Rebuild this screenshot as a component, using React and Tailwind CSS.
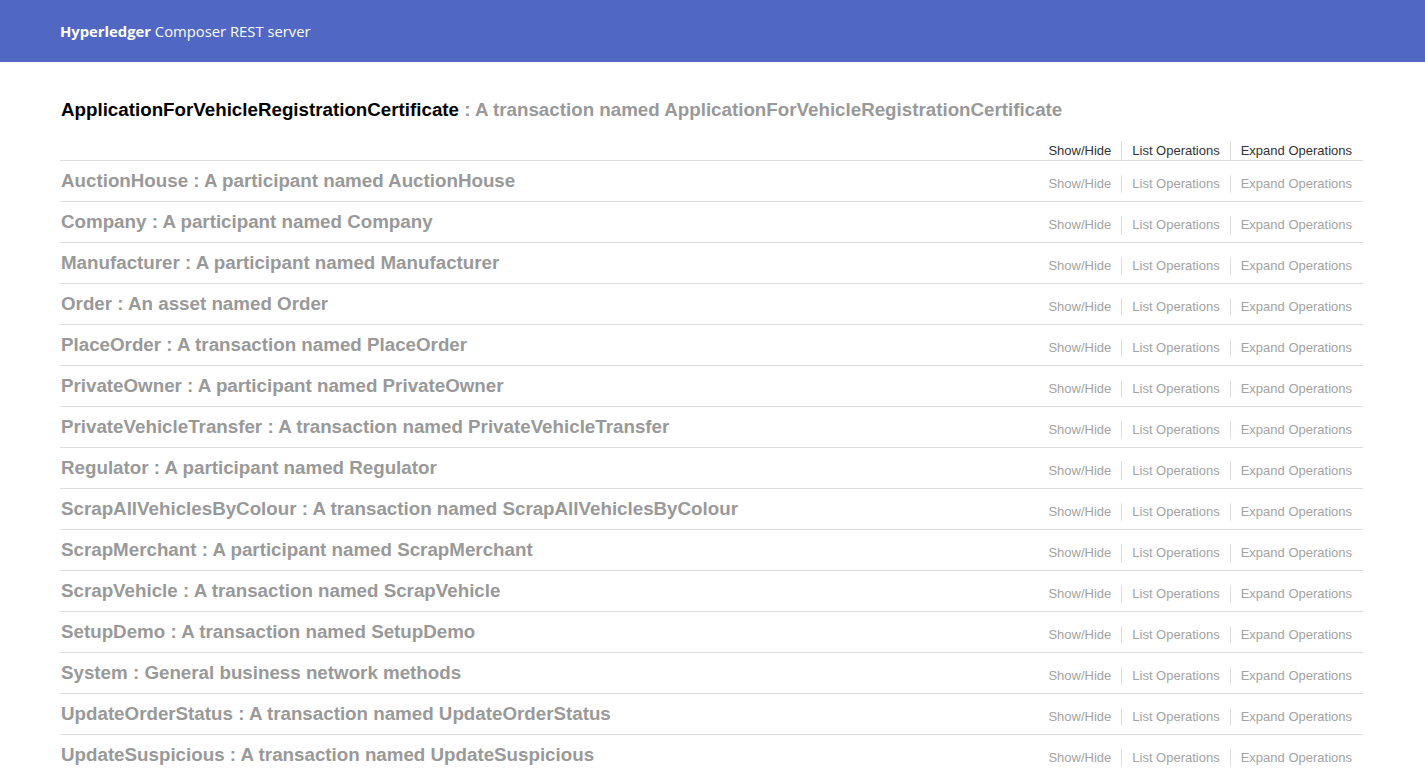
import React from 'react';

const resources = [
  ['AuctionHouse', 'A participant named AuctionHouse'],
  ['Company', 'A participant named Company'],
  ['Manufacturer', 'A participant named Manufacturer'],
  ['Order', 'An asset named Order'],
  ['PlaceOrder', 'A transaction named PlaceOrder'],
  ['PrivateOwner', 'A participant named PrivateOwner'],
  ['PrivateVehicleTransfer', 'A transaction named PrivateVehicleTransfer'],
  ['Regulator', 'A participant named Regulator'],
  ['ScrapAllVehiclesByColour', 'A transaction named ScrapAllVehiclesByColour'],
  ['ScrapMerchant', 'A participant named ScrapMerchant'],
  ['ScrapVehicle', 'A transaction named ScrapVehicle'],
  ['SetupDemo', 'A transaction named SetupDemo'],
  ['System', 'General business network methods'],
  ['UpdateOrderStatus', 'A transaction named UpdateOrderStatus'],
  ['UpdateSuspicious', 'A transaction named UpdateSuspicious'],
];

function Options({ active }) {
  const color = active ? 'text-[#333333]' : 'text-[#a3a3a3]';
  return (
    <ul className={`flex items-center text-[13px] leading-[18px] pr-[11px] ${color}`}>
      <li className="pr-[10px] border-r border-[#dddddd]">Show/Hide</li>
      <li className="px-[10px] border-r border-[#dddddd]">List Operations</li>
      <li className="pl-[10px]">Expand Operations</li>
    </ul>
  );
}

export default function App() {
  return (
    <div className="min-h-screen bg-white" style={{ fontFamily: '"Liberation Sans", Arial, sans-serif' }}>
      {/* Cabeçalho */}
      <div className="h-[62px] bg-[#5067c4] flex items-center px-[60px]">
        <span className="text-white text-[14.8px]" style={{ fontFamily: '"Open Sans", sans-serif' }}>
          <span className="font-bold">Hyperledger</span> Composer REST server
        </span>
      </div>

      <div className="ml-[60px] mr-[62px] pt-[27px]">
        {/* Recurso ativo */}
        <div className="border-b border-[#dddddd]">
          <h2 className="h-[40px] flex items-center pt-[2px] pl-[1px] text-[18.75px] font-bold">
            <span className="text-black">ApplicationForVehicleRegistrationCertificate</span>
            <span className="text-[#999999]">&nbsp;: A transaction named ApplicationForVehicleRegistrationCertificate</span>
          </h2>
          <div className="flex justify-end pt-[12px] h-[31px]">
            <Options active />
          </div>
        </div>

        {resources.map(([name, desc]) => (
          <div key={name} className="h-[41px] border-b border-[#dddddd] flex items-start justify-between">
            <h2 className="h-[40px] flex items-center pl-[1px] text-[18.75px] font-bold text-[#999999]">
              {name} : {desc}
            </h2>
            <div className="pt-[14px]">
              <Options />
            </div>
          </div>
        ))}
      </div>
    </div>
  );
}
